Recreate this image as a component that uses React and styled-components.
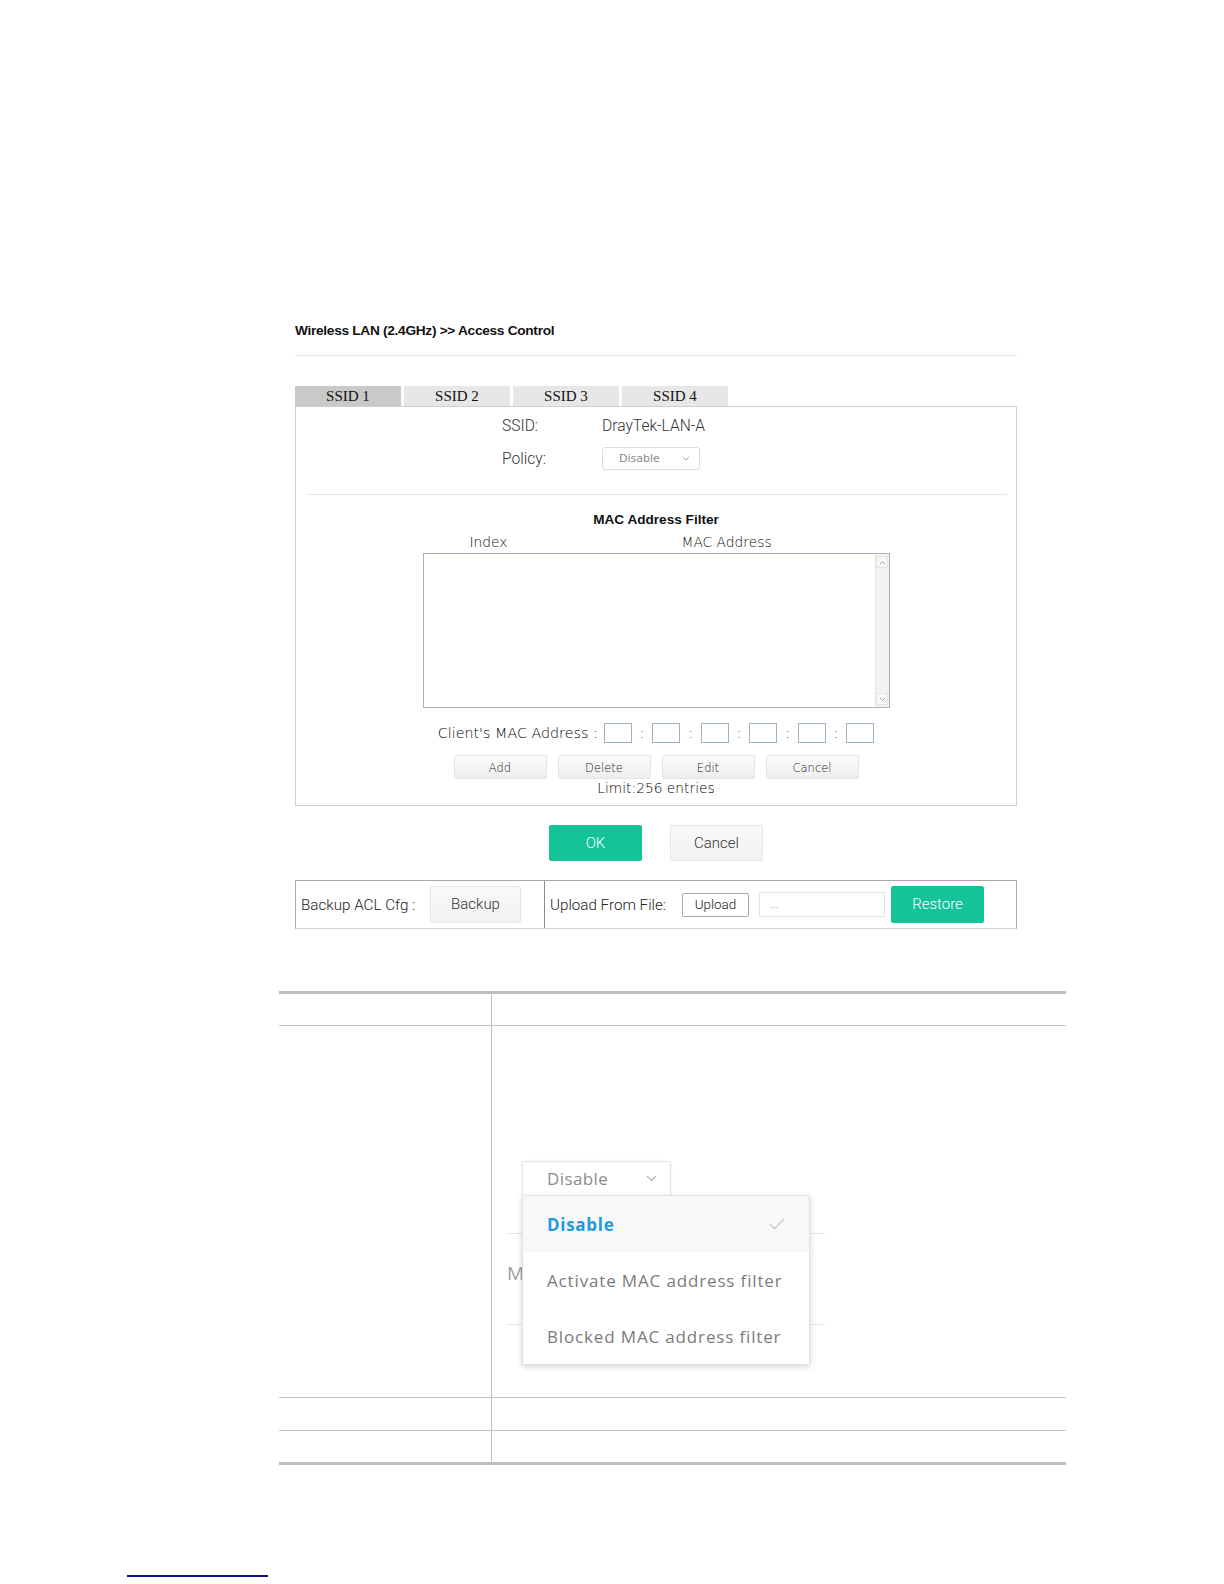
import React from 'react';
import styled, { createGlobalStyle } from 'styled-components';

const Global = createGlobalStyle`
  html, body { margin: 0; padding: 0; background: #fff; }
  body { font-family: "Liberation Sans", Arial, sans-serif; color: #222; }
  * { box-sizing: border-box; }
`;

const Page = styled.div`
  width: 1224px;
  min-height: 1584px;
  overflow: hidden;
  padding-top: 323px;
`;

const Figure = styled.div`
  margin-left: 295px;
  width: 722px;
`;

const Title = styled.div`
  font: bold 13.7px/16px "Liberation Sans", Arial, sans-serif;
  letter-spacing: -0.3px;
  color: #111;
`;

const Rule = styled.div`
  margin-top: 16px;
  height: 1px;
  background: #e4e4e4;
`;

const Tabs = styled.div`
  margin-top: 30px;
  display: flex;
  gap: 3px;
  height: 20px;
`;

const Tab = styled.div`
  width: 106px;
  height: 20px;
  background: ${p => (p.$active ? '#c9c9c9' : '#e7e7e7')};
  font: 15px/21px "Liberation Serif", "Times New Roman", serif;
  color: #111;
  text-align: center;
`;

const Panel = styled.div`
  height: 400px;
  border: 1px solid #cfcfcf;
  padding-top: 9px;
  display: flex;
  flex-direction: column;
  align-items: center;
`;

const FormGrid = styled.div`
  align-self: flex-start;
  margin-left: 206px;
  display: grid;
  grid-template-columns: 100px auto;
  row-gap: 11px;
  align-items: center;
`;

const Label = styled.div`
  font: 300 15.6px/20px Roboto, "Liberation Sans", sans-serif;
  color: #333;
`;

const PolicySelect = styled.div`
  width: 98px;
  height: 23px;
  border: 1px solid #dcdcdc;
  border-radius: 3px;
  display: flex;
  align-items: center;
  justify-content: space-between;
  padding: 0 9px 0 16px;
  font: 11px/1 "DejaVu Sans", sans-serif;
  color: #8a8a8a;
`;

const Separator = styled.div`
  align-self: stretch;
  margin: 24px 9px 0 10px;
  height: 1px;
  background: #e6e6e6;
`;

const FilterTitle = styled.div`
  margin-top: 17px;
  font: bold 13.6px/16px "Liberation Sans", Arial, sans-serif;
  color: #111;
`;

const ListWrap = styled.div`
  width: 467px;
`;

const Headers = styled.div`
  margin-top: 5px;
  display: flex;
  padding-left: 47px;
  height: 18px;
  font: 300 13.8px/18px "DejaVu Sans", sans-serif;
  color: #111;
`;

const HeaderCell = styled.span`
  width: ${p => p.$w || 'auto'};
`;

const Listbox = styled.div`
  margin-top: 2px;
  height: 155px;
  border: 1px solid #a3b3c2;
  display: flex;
  justify-content: flex-end;
`;

const Scrollbar = styled.div`
  width: 14px;
  background: #f2f2f2;
  border-left: 1px solid #e8e8e8;
  display: flex;
  flex-direction: column;
  justify-content: space-between;
  align-items: center;
  padding: 2px 0;
`;

const ScrollArrow = styled.div`
  width: 12px;
  height: 12px;
  background: #f7f7f7;
  border: 1px solid #e4e4e4;
  display: flex;
  align-items: center;
  justify-content: center;
`;

const MacRow = styled.div`
  margin-top: 15px;
  display: flex;
  align-items: center;
  height: 20px;
`;

const MacLabel = styled.span`
  font: 300 14.3px/20px "DejaVu Sans", sans-serif;
  color: #000;
  margin-right: 6px;
`;

const MacInput = styled.div`
  width: 28px;
  height: 20px;
  border: 1px solid #9fb1c4;
  background: #fff;
`;

const Colon = styled.span`
  width: 20.5px;
  text-align: center;
  font: 300 14px/20px "DejaVu Sans", sans-serif;
  color: #222;
`;

const ButtonsRow = styled.div`
  margin-top: 12px;
  display: flex;
  gap: 11px;
`;

const SmallBtn = styled.div`
  width: 93px;
  height: 24px;
  padding-top: 3px;
  background: linear-gradient(#fbfbfb, #eeeeee);
  border: 1px solid #e4e4e4;
  border-radius: 2px;
  display: flex;
  align-items: center;
  justify-content: center;
  font: 300 11.5px/1 "DejaVu Sans", sans-serif;
  color: #222;
`;

const Limit = styled.div`
  margin-top: 1px;
  font: 300 13.8px/16px "DejaVu Sans", sans-serif;
  color: #000;
`;

const OkRow = styled.div`
  margin-top: 19px;
  display: flex;
  justify-content: center;
  gap: 28px;
`;

const BigBtn = styled.div`
  width: ${p => p.$w || '93px'};
  height: ${p => p.$h || '36px'};
  background: ${p => (p.$primary ? '#14c39a' : 'linear-gradient(#f8f9fa, #f1f2f3)')};
  border: 1px solid ${p => (p.$primary ? '#14c39a' : '#e6e6e6')};
  border-radius: 2px;
  display: flex;
  align-items: center;
  justify-content: center;
  font: 300 15px/1 Roboto, "Liberation Sans", sans-serif;
  color: ${p => (p.$primary ? '#ffffff' : '#333')};
  flex-shrink: 0;
`;

const BackupBox = styled.div`
  margin-top: 19px;
  height: 49px;
  border: 1px solid #a8a8a8;
  border-bottom-color: #cfcfcf;
  display: grid;
  grid-template-columns: 248px 1fr;
`;

const LeftCell = styled.div`
  display: flex;
  align-items: center;
  padding-left: 5px;
`;

const RightCell = styled.div`
  display: flex;
  align-items: center;
  padding-left: 5px;
  border-left: 1px solid #8c8c8c;
`;

const CellText = styled.span`
  width: ${p => p.$w};
  font: 300 15.2px/20px Roboto, "Liberation Sans", sans-serif;
  color: #222;
  flex-shrink: 0;
`;

const UploadBtn = styled.div`
  width: 67px;
  height: 24px;
  border: 1px solid #a9a9a9;
  border-radius: 2px;
  background: #fff;
  display: flex;
  align-items: center;
  justify-content: center;
  font: 300 13.5px/1 Roboto, "Liberation Sans", sans-serif;
  color: #222;
  flex-shrink: 0;
`;

const FileInput = styled.div`
  margin-left: 10px;
  margin-right: 6px;
  width: 126px;
  height: 25px;
  border: 1px solid #e3e3e3;
  padding-left: 10px;
  font: 300 12px/23px Roboto, sans-serif;
  color: #999;
  flex-shrink: 0;
`;

const Table = styled.div`
  margin-left: 279px;
  margin-top: 62px;
  width: 787px;
  border-top: 3px solid #bfbfbf;
  border-bottom: 3px solid #bfbfbf;
`;

const Row = styled.div`
  display: grid;
  grid-template-columns: 213px 1fr;
  height: ${p => p.$h}px;
  border-bottom: ${p => (p.$last ? 'none' : '1px solid #c4c4c4')};
`;

const LeftCol = styled.div`
  border-right: 1px solid #bdbdbd;
`;

const RightCol = styled.div`
  padding-left: 15px;
  padding-top: ${p => p.$pt || 0}px;
`;

const DropFig = styled.div`
  position: relative;
  width: 318px;
`;

const SelectBox = styled.div`
  margin-left: 15px;
  width: 149px;
  height: 34px;
  background: #fff;
  border: 1px solid #e6e6e6;
  border-bottom: none;
  border-radius: 3px 3px 0 0;
  box-shadow: 0 0 3px rgba(0, 0, 0, 0.08);
  display: flex;
  align-items: center;
  justify-content: space-between;
  padding: 0 13px 0 24px;
  font: 17px/1 "Open Sans", "DejaVu Sans", sans-serif;
  letter-spacing: 0.4px;
  color: #8c8c8c;
`;

const BgLine = styled.div`
  margin-top: ${p => p.$mt}px;
  height: 1px;
  background: #e6e6e6;
`;

const BgText = styled.div`
  margin-top: 29px;
  height: 20px;
  font: 19px/20px "Open Sans", "DejaVu Sans", sans-serif;
  color: #a0a0a0;
`;

const Menu = styled.div`
  position: absolute;
  left: 15px;
  top: 34px;
  width: 288px;
  background: #fff;
  border: 1px solid #e2e2e2;
  border-radius: 2px;
  box-shadow: 0 2px 6px rgba(0, 0, 0, 0.16);
`;

const MenuItem = styled.div`
  height: 56px;
  display: flex;
  align-items: center;
  justify-content: space-between;
  padding: 0 24px 0 24px;
  white-space: nowrap;
  background: ${p => (p.$active ? '#f8f8f8' : '#fff')};
  font: ${p => (p.$active ? 700 : 400)} 17px/1 "Open Sans", "DejaVu Sans", sans-serif;
  letter-spacing: ${p => (p.$active ? '0.7px' : '0.85px')};
  color: ${p => (p.$active ? '#1e9bd8' : '#7b7b7b')};
`;

const Underline = styled.div`
  margin-left: 127px;
  margin-top: 110px;
  width: 141px;
  height: 2px;
  background: #0c0c94;
`;

const Chevron = ({ size = 10, color = '#9a9a9a' }) => (
  <svg width={size} height={size * 0.6} viewBox="0 0 10 6" fill="none">
    <path d="M1 1 L5 5 L9 1" stroke={color} strokeWidth="1.1" />
  </svg>
);

const Check = () => (
  <svg width="16" height="12" viewBox="0 0 16 12" fill="none">
    <path d="M1 6 L5.5 10.5 L15 1" stroke="#cfcfcf" strokeWidth="1.6" />
  </svg>
);

const Arrow = ({ up }) => (
  <svg width="7" height="5" viewBox="0 0 7 5" fill="none">
    <path d={up ? 'M1 4 L3.5 1.5 L6 4' : 'M1 1 L3.5 3.5 L6 1'} stroke="#a8a8a8" strokeWidth="1" />
  </svg>
);

export default function App() {
  const macFields = [0, 1, 2, 3, 4, 5];
  return (
    <Page>
      <Global />
      <Figure>
        <Title>Wireless LAN (2.4GHz) &gt;&gt; Access Control</Title>
        <Rule />
        <Tabs>
          <Tab $active>SSID 1</Tab>
          <Tab>SSID 2</Tab>
          <Tab>SSID 3</Tab>
          <Tab>SSID 4</Tab>
        </Tabs>
        <Panel>
          <FormGrid>
            <Label>SSID:</Label>
            <Label>DrayTek-LAN-A</Label>
            <Label>Policy:</Label>
            <PolicySelect>
              <span>Disable</span>
              <Chevron size={8} />
            </PolicySelect>
          </FormGrid>
          <Separator />
          <FilterTitle>MAC Address Filter</FilterTitle>
          <ListWrap>
            <Headers>
              <HeaderCell $w="212px">Index</HeaderCell>
              <HeaderCell>MAC Address</HeaderCell>
            </Headers>
            <Listbox>
              <Scrollbar>
                <ScrollArrow><Arrow up /></ScrollArrow>
                <ScrollArrow><Arrow /></ScrollArrow>
              </Scrollbar>
            </Listbox>
          </ListWrap>
          <MacRow>
            <MacLabel>Client's MAC Address :</MacLabel>
            {macFields.map(i => (
              <React.Fragment key={i}>
                {i > 0 && <Colon>:</Colon>}
                <MacInput />
              </React.Fragment>
            ))}
          </MacRow>
          <ButtonsRow>
            <SmallBtn>Add</SmallBtn>
            <SmallBtn>Delete</SmallBtn>
            <SmallBtn>Edit</SmallBtn>
            <SmallBtn>Cancel</SmallBtn>
          </ButtonsRow>
          <Limit>Limit:256 entries</Limit>
        </Panel>
        <OkRow>
          <BigBtn $primary>OK</BigBtn>
          <BigBtn>Cancel</BigBtn>
        </OkRow>
        <BackupBox>
          <LeftCell>
            <CellText $w="129px">Backup ACL Cfg :</CellText>
            <BigBtn $w="91px" $h="37px">Backup</BigBtn>
          </LeftCell>
          <RightCell>
            <CellText $w="132px">Upload From File:</CellText>
            <UploadBtn>Upload</UploadBtn>
            <FileInput>...</FileInput>
            <BigBtn $primary $w="93px" $h="37px">Restore</BigBtn>
          </RightCell>
        </BackupBox>
      </Figure>

      <Table>
        <Row $h={32}>
          <LeftCol />
          <RightCol />
        </Row>
        <Row $h={372}>
          <LeftCol />
          <RightCol $pt={135}>
            <DropFig>
              <SelectBox>
                <span>Disable</span>
                <Chevron size={11} color="#aaa" />
              </SelectBox>
              <BgLine $mt={38} />
              <BgText>M</BgText>
              <BgLine $mt={41} />
              <Menu>
                <MenuItem $active>
                  <span>Disable</span>
                  <Check />
                </MenuItem>
                <MenuItem>Activate MAC address filter</MenuItem>
                <MenuItem>Blocked MAC address filter</MenuItem>
              </Menu>
            </DropFig>
          </RightCol>
        </Row>
        <Row $h={33}>
          <LeftCol />
          <RightCol />
        </Row>
        <Row $h={31} $last>
          <LeftCol />
          <RightCol />
        </Row>
      </Table>
      <Underline />
    </Page>
  );
}
